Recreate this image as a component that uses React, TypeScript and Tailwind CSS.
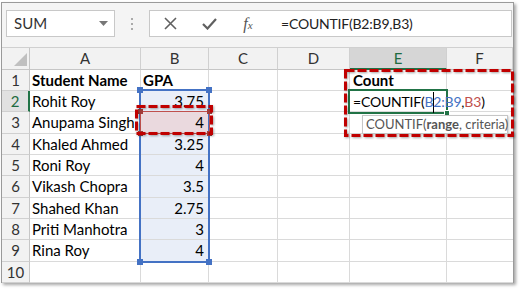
import React from "react";

const font = { fontFamily: "Lato, 'Liberation Sans', sans-serif" };

const rows: [string, string][] = [
  ["Rohit Roy", "3.75"],
  ["Anupama Singh", "4"],
  ["Khaled Ahmed", "3.25"],
  ["Roni Roy", "4"],
  ["Vikash Chopra", "3.5"],
  ["Shahed Khan", "2.75"],
  ["Priti Manhotra", "3"],
  ["Rina Roy", "4"],
];

const rowH = ["h-[21px]", "h-[21px]", "h-[22px]", "h-[21px]", "h-[21px]", "h-[22px]", "h-[21px]", "h-[21px]", "h-[22px]", "h-[21px]"];

function Cell({ children, className = "" }: { children?: React.ReactNode; className?: string }) {
  return <div className={`border-r border-b border-[#dadada] flex items-center overflow-visible whitespace-nowrap ${className}`}>{children}</div>;
}

export default function App() {
  const all: [string, string][] = [["Student Name", "GPA"], ...rows, ["", ""]];
  return (
    <div className="w-[521px] h-[290px] bg-white relative overflow-hidden" style={font}>
      <div className="ml-[1px] mt-[2px] w-[513px] h-[281px] border border-[#9a9a9a] shadow-[2px_2px_3px_rgba(0,0,0,0.35)] bg-white relative">
        {/* toolbar */}
        <div className="h-[45px] bg-[#f4f4f4] flex items-start pt-[7px] pl-[4px] border-b border-[#d0d0d0]">
          <div className="w-[109px] h-[27px] bg-white border border-[#c8c8c8] flex items-center pl-[7px] pr-[6px] text-[15px] text-[#333]">
            <span className="flex-1">SUM</span>
            <svg width="9" height="5" viewBox="0 0 9 5"><path d="M0 0h9L4.5 5z" fill="#777" /></svg>
          </div>
          <div className="w-[34px] h-[27px] flex flex-col items-center justify-center gap-[3px]">
            <span className="w-[2px] h-[2px] bg-[#aaa]" />
            <span className="w-[2px] h-[2px] bg-[#aaa]" />
            <span className="w-[2px] h-[2px] bg-[#aaa]" />
          </div>
          <div className="w-[363px] h-[27px] bg-white border border-[#c8c8c8] flex items-center">
            <div className="w-[38px] flex justify-center ml-[1px]">
              <svg width="13" height="13" viewBox="0 0 13 13"><path d="M1 1L12 12M12 1L1 12" stroke="#606060" strokeWidth="1.6" /></svg>
            </div>
            <div className="w-[40px] flex justify-center">
              <svg width="15" height="12" viewBox="0 0 15 12"><path d="M1 6L5.5 10.5L14 1" stroke="#606060" strokeWidth="2.2" fill="none" /></svg>
            </div>
            <div className="w-[38px] flex justify-center items-baseline text-[#555] italic" style={{ fontFamily: "'Liberation Serif', serif" }}>
              <span className="text-[16px]">f</span>
              <span className="text-[11px]">x</span>
            </div>
            <div className="pl-[14px] text-[14px] tracking-[-0.2px] text-[#222]">=COUNTIF(B2:B9,B3)</div>
          </div>
        </div>
        {/* grid */}
        <div className="grid grid-cols-[28px_111px_68px_69px_72px_97px_66px] text-[15px] text-black">
          {/* header row */}
          <div className="h-[22px] bg-[#f2f2f2] border-r border-b border-[#c6c6c6] relative">
            <svg className="absolute left-[12px] top-[5px]" width="13" height="13" viewBox="0 0 13 13"><path d="M13 0V13H0z" fill="#c0c0c0" /></svg>
          </div>
          {["A", "B", "C", "D", "E", "F"].map((c) => (
            <div
              key={c}
              className={`h-[22px] flex items-center justify-center border-r border-[#d0d0d0] ${
                c === "E" ? "bg-[#d6d6d6] text-[#1e6b40] border-b-2 border-b-[#217346]" : "bg-[#f2f2f2] text-[#333] border-b border-b-[#c6c6c6]"
              }`}
            >
              {c}
            </div>
          ))}
          {all.map(([name, gpa], i) => {
            const r = i + 1;
            const h = rowH[i];
            const inSel = r >= 2 && r <= 9;
            return (
              <React.Fragment key={r}>
                <div
                  className={`${h} flex items-center justify-center border-b border-[#d0d0d0] ${
                    r === 2 ? "bg-[#e1e1e1] text-[#1e6b40] border-r-2 border-r-[#217346]" : "bg-[#f2f2f2] text-[#333] border-r border-r-[#c6c6c6]"
                  }`}
                >
                  {r}
                </div>
                <Cell className={`${h} pl-[2px] ${r === 1 ? "font-bold" : ""}`}>{name}</Cell>
                <Cell
                  className={`${h} ${r === 1 ? "pl-[2px] font-bold" : "justify-end pr-[4px]"} ${
                    r === 3 ? "bg-[#ead9de]" : inSel ? "bg-[#e9eef8]" : ""
                  }`}
                >
                  {gpa}
                </Cell>
                <Cell className={h} />
                <Cell className={h} />
                <Cell className={`${h} pl-[3px] ${r === 1 ? "font-bold" : ""}`}>
                  {r === 1 ? "Count" : r === 2 ? (
                    <span className="relative z-10 text-[14px] tracking-[-0.2px]">
                      =COUNTIF(<span className="text-[#4472c4]">B2:B9</span>,<span className="text-[#c0504d]">B3</span>)
                    </span>
                  ) : null}
                </Cell>
                <Cell className={`${h} border-r-0`} />
              </React.Fragment>
            );
          })}
        </div>

        {/* B2:B9 range border */}
        <div className="absolute left-[137px] top-[86px] w-[71px] h-[174px] border-2 border-[#4472c4] pointer-events-none">
          <span className="absolute -left-[4px] -top-[4px] w-[6px] h-[6px] bg-[#4472c4]" />
          <span className="absolute -right-[4px] -top-[4px] w-[6px] h-[6px] bg-[#4472c4]" />
          <span className="absolute -left-[4px] -bottom-[4px] w-[6px] h-[6px] bg-[#4472c4]" />
          <span className="absolute -right-[4px] -bottom-[4px] w-[6px] h-[6px] bg-[#4472c4]" />
        </div>
        {/* B3 reference border */}
        <div className="absolute left-[138px] top-[108px] w-[70px] h-[23px] border border-[#c0504d] pointer-events-none">
          <span className="absolute -left-[3px] -top-[3px] w-[5px] h-[5px] bg-[#a23c3a]" />
          <span className="absolute -right-[3px] -top-[3px] w-[5px] h-[5px] bg-[#a23c3a]" />
          <span className="absolute -left-[3px] -bottom-[3px] w-[5px] h-[5px] bg-[#a23c3a]" />
          <span className="absolute -right-[3px] -bottom-[3px] w-[5px] h-[5px] bg-[#a23c3a]" />
        </div>
        {/* active cell E2 */}
        <div className="absolute left-[346px] top-[86px] w-[100px] h-[25px] border-2 border-[#217346] pointer-events-none">
          <span className="absolute -right-[4px] -bottom-[4px] w-[6px] h-[6px] bg-[#217346] border border-white" />
        </div>
        {/* text cursor */}
        <div className="absolute left-[431px] top-[89px] w-[1px] h-[21px] bg-black" />
        {/* tooltip */}
        <div className="absolute left-[360px] top-[112px] w-[146px] h-[19px] bg-white border border-[#c6c6c6] shadow-[1px_1px_2px_rgba(0,0,0,0.2)] flex items-center pl-[3px] text-[13px] text-[#555] whitespace-nowrap">
          COUNTIF(<span className="font-bold">range</span>, criteria)
        </div>
        {/* red dashed annotations */}
        <svg className="absolute left-[133px] top-[102px] overflow-visible" width="78" height="30" style={{ filter: "drop-shadow(1px 1px 1px rgba(0,0,0,0.35))" }}>
          <rect x="1.5" y="1.5" width="75" height="27" fill="none" stroke="#c00000" strokeWidth="3" strokeDasharray="9 3" />
        </svg>
        <svg className="absolute left-[342px] top-[66px] overflow-visible" width="170" height="68" style={{ filter: "drop-shadow(1px 1px 1px rgba(0,0,0,0.35))" }}>
          <rect x="1.5" y="1.5" width="167" height="65" fill="none" stroke="#c00000" strokeWidth="3" strokeDasharray="9 3" />
        </svg>
      </div>
    </div>
  );
}
